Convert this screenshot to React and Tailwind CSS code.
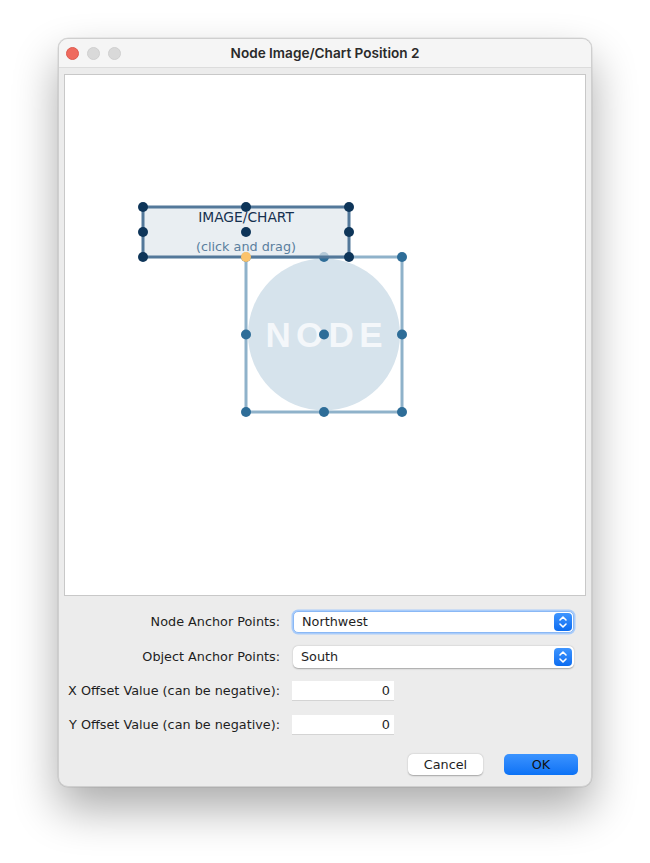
import React from "react";

function Stepper() {
  return (
    <div className="w-[18px] h-[18px] rounded-[4px] bg-gradient-to-b from-[#3d95ff] to-[#0a6cf0] flex items-center justify-center">
      <svg width="10" height="14" viewBox="0 0 10 14" fill="none" stroke="white" strokeWidth="1.6" strokeLinecap="round" strokeLinejoin="round">
        <path d="M2 5 L5 2 L8 5" />
        <path d="M2 9 L5 12 L8 9" />
      </svg>
    </div>
  );
}

function Diagram() {
  const imgH = [78, 181, 284];
  const imgV = [132, 157, 182];
  const nodeH = [181, 259, 337];
  const nodeV = [182, 259.5, 337];
  return (
    <svg width="520" height="520" viewBox="0 0 520 520" className="block">
      <circle cx="259" cy="259.5" r="76" fill="#d6e3ec" />
      <text x="259" y="272" textAnchor="middle" textLength="117" fill="#f4f7fa" fontFamily="'Liberation Sans', sans-serif" fontWeight="bold" fontSize="35">NODE</text>
      <rect x="181" y="182" width="156" height="155" fill="none" stroke="#8fb2ca" strokeWidth="3" />
      {nodeV.map((y) =>
        nodeH.map((x) => (
          <circle key={`n${x}-${y}`} cx={x} cy={y} r="5" fill="#2e6d98" />
        ))
      )}
      <rect x="78" y="132" width="206" height="50" fill="rgba(225,232,238,0.75)" stroke="#53789a" strokeWidth="3" />
      <text x="181" y="147" textAnchor="middle" fill="#15304f" fontFamily="'DejaVu Sans', sans-serif" fontSize="13.8">IMAGE/CHART</text>
      <text x="181" y="176" textAnchor="middle" fill="#5b7f9e" fontFamily="'DejaVu Sans', sans-serif" fontSize="12.8">(click and drag)</text>
      {imgV.map((y) =>
        imgH.map((x) => (
          <circle key={`i${x}-${y}`} cx={x} cy={y} r="5" fill={x === 181 && y === 182 ? "#fbc36c" : "#0e3559"} />
        ))
      )}
    </svg>
  );
}

export default function App() {
  return (
    <div className="min-h-[863px] w-[650px] bg-white pt-[38px] pl-[58px] font-['DejaVu_Sans',sans-serif]">
      <div className="w-[534px] h-[749px] rounded-[10px] bg-[#ececec] border border-[#cfcfcf] shadow-[0_22px_45px_rgba(0,0,0,0.33),0_0_0_0.5px_rgba(0,0,0,0.1)] flex flex-col overflow-hidden">
        <div className="h-[29px] shrink-0 bg-[#f5f5f5] border-b border-[#dcdcdc] flex items-center relative">
          <div className="flex items-center gap-[8px] pl-[7px]">
            <div className="w-[13px] h-[13px] rounded-full bg-[#ef6a5e] border border-[#dd5a4f]" />
            <div className="w-[13px] h-[13px] rounded-full bg-[#d9d9d9] border border-[#cfcfcf]" />
            <div className="w-[13px] h-[13px] rounded-full bg-[#d9d9d9] border border-[#cfcfcf]" />
          </div>
          <div className="absolute inset-0 flex items-center justify-center font-['Inter',sans-serif] font-semibold text-[13.6px] text-[#2a2a2a] pointer-events-none">
            Node Image/Chart Position 2
          </div>
        </div>
        <div className="mx-[5px] mt-[6px] h-[522px] shrink-0 bg-white border border-[#c8c8c8]">
          <Diagram />
        </div>
        <div className="flex flex-col text-[12.8px] text-[#1e1e1e]">
          <div className="flex items-center mt-[15px] h-[22px]">
            <div className="w-[221px] text-right">Node Anchor Points:</div>
            <div className="ml-[13px] w-[281px] h-[22px] rounded-[5px] bg-white border border-[#8ab8f5] shadow-[0_0_0_1.5px_#a9ccfa] flex items-center justify-between pl-[8px] pr-[1px]">
              <span>Northwest</span>
              <Stepper />
            </div>
          </div>
          <div className="flex items-center mt-[13px] h-[22px]">
            <div className="w-[221px] text-right">Object Anchor Points:</div>
            <div className="ml-[13px] w-[281px] h-[22px] rounded-[5px] bg-white shadow-[0_0.5px_1.5px_rgba(0,0,0,0.3)] flex items-center justify-between pl-[8px] pr-[2px]">
              <span>South</span>
              <Stepper />
            </div>
          </div>
          <div className="flex items-center mt-[13px] h-[20px]">
            <div className="w-[221px] text-right">X Offset Value (can be negative):</div>
            <div className="ml-[12px] w-[102px] h-[20px] bg-white border-b border-[#d4d4d4] flex items-center justify-end pr-[4px]">0</div>
          </div>
          <div className="flex items-center mt-[14px] h-[20px]">
            <div className="w-[221px] text-right">Y Offset Value (can be negative):</div>
            <div className="ml-[12px] w-[102px] h-[20px] bg-white border-b border-[#d4d4d4] flex items-center justify-end pr-[4px]">0</div>
          </div>
          <div className="flex justify-end items-center mt-[19px] pr-[13px] gap-[21px]">
            <div className="w-[75px] h-[21px] rounded-[5px] bg-white shadow-[0_0.5px_1.5px_rgba(0,0,0,0.3)] flex items-center justify-center">Cancel</div>
            <div className="w-[74px] h-[21px] rounded-[5px] bg-gradient-to-b from-[#3a93ff] to-[#0a72f5] flex items-center justify-center text-[#111]">OK</div>
          </div>
        </div>
      </div>
    </div>
  );
}
